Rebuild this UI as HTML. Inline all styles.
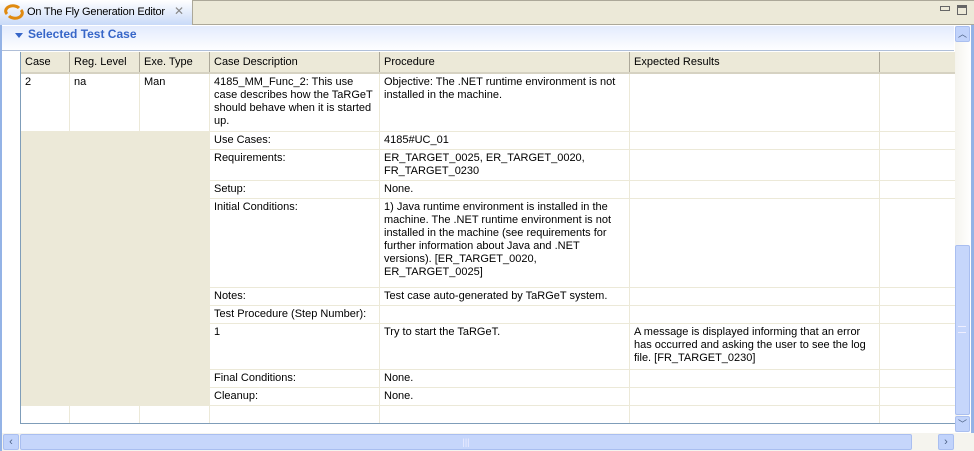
<!DOCTYPE html>
<html><head><style>
*{margin:0;padding:0;box-sizing:border-box}
body{width:974px;height:451px;background:#ECE9D8;font-family:"Liberation Sans",Tahoma,sans-serif;font-size:11px;color:#000;position:relative;overflow:hidden}
.tabbar{position:absolute;left:0;top:0;width:974px;height:25px;background:#ECE9D8;border-top:1px solid #aca899;border-bottom:1px solid #aca899}
.tab{position:absolute;left:0;top:0;width:193px;height:25px;background:linear-gradient(#fff,#c9daf8);border-right:1px solid #aca899}
.tab span{position:absolute;left:27px;top:6px;font-size:11px;letter-spacing:-0.2px}
.frame{position:absolute;left:0;top:25px;width:974px;height:408px;background:#fff;border-left:2px solid #94b3e6;border-right:3px solid #94b3e6}
.hdr{position:absolute;left:2px;top:26px;width:952px;height:25px;background:linear-gradient(#e3ebfd,#fff)}
.hdr span{position:absolute;left:26px;top:1px;color:#3766c8;font-weight:bold;font-size:12px}
table{position:absolute;left:20px;top:52px;border-collapse:collapse;table-layout:fixed;width:935px}
td,th{border:1px solid #ECE9D8;vertical-align:top;padding:2px 4px;line-height:13px;font-weight:normal;text-align:left;overflow:hidden}
th{background:#ECE9D8;border-right:1px solid #aca899;border-bottom:2px solid #d6d2c2;height:20px;padding:3px 4px}
.b{background:#ECE9D8}
.tw{position:absolute;left:20px;top:52px;width:936px;height:372px;border-left:1px solid #7f9db9;border-bottom:1px solid #7f9db9}
</style></head><body>
<div class="tabbar"></div>
<div class="tab"><svg style="position:absolute;left:3px;top:4px" width="22" height="16" viewBox="0 0 22 16"><path d="M4 10 A7 5 0 0 1 16 4" stroke="#e08a10" stroke-width="3" fill="none"/><path d="M18 6 A7 5 0 0 1 6 12" stroke="#e08a10" stroke-width="3" fill="none"/></svg><span>On The Fly Generation Editor</span><span style="left:174px;top:4px;color:#888;font-size:12px">✕</span></div>
<div style="position:absolute;left:940px;top:6px;width:10px;height:5px;border:1px solid #666"></div>
<div style="position:absolute;left:957px;top:5px;width:10px;height:10px;border:1px solid #666;border-top-width:3px"></div>
<div class="frame"></div>
<div class="hdr"><svg style="position:absolute;left:13px;top:7px" width="8" height="6"><path d="M0 0H8L4 5Z" fill="#3766c8"/></svg><span>Selected Test Case</span></div>
<div style="position:absolute;left:2px;top:50px;width:952px;height:1px;background:#b0bfd8"></div>
<table>
<colgroup><col style="width:49px"><col style="width:70px"><col style="width:70px"><col style="width:170px"><col style="width:250px"><col style="width:250px"><col style="width:76px"></colgroup>
<tr><th>Case</th><th>Reg. Level</th><th>Exe. Type</th><th>Case Description</th><th>Procedure</th><th>Expected Results</th><th style="border-right:none"></th></tr>
<tr style="height:58px"><td>2</td><td>na</td><td>Man</td><td>4185_MM_Func_2: This use case describes how the TaRGeT should behave when it is started up.</td><td>Objective: The .NET runtime environment is not installed in the machine.</td><td></td><td></td></tr>
<tr style="height:18px"><td class="b" colspan="3" rowspan="9" style="border:none"></td><td>Use Cases:</td><td>4185#UC_01</td><td></td><td></td></tr>
<tr style="height:31px"><td>Requirements:</td><td>ER_TARGET_0025, ER_TARGET_0020, FR_TARGET_0230</td><td></td><td></td></tr>
<tr style="height:18px"><td>Setup:</td><td>None.</td><td></td><td></td></tr>
<tr style="height:89px"><td>Initial Conditions:</td><td>1) Java runtime environment is installed in the machine. The .NET runtime environment is not installed in the machine (see requirements for further information about Java and .NET versions). [ER_TARGET_0020, ER_TARGET_0025]</td><td></td><td></td></tr>
<tr style="height:18px"><td>Notes:</td><td>Test case auto-generated by TaRGeT system.</td><td></td><td></td></tr>
<tr style="height:18px"><td>Test Procedure (Step Number):</td><td></td><td></td><td></td></tr>
<tr style="height:46px"><td>1</td><td>Try to start the TaRGeT.</td><td>A message is displayed informing that an error has occurred and asking the user to see the log file. [FR_TARGET_0230]</td><td></td></tr>
<tr style="height:18px"><td>Final Conditions:</td><td>None.</td><td></td><td></td></tr>
<tr style="height:18px"><td>Cleanup:</td><td>None.</td><td></td><td></td></tr>
<tr style="height:18px"><td></td><td></td><td></td><td></td><td></td><td></td><td></td></tr>
</table>
<div class="tw"></div>
<div style="position:absolute;left:955px;top:26px;width:16px;height:406px;background:linear-gradient(90deg,#f5f4ee,#fff)"></div>
<div style="position:absolute;left:955px;top:26px;width:15px;height:16px;background:#c1d3fb;border:1px solid #aabff0;border-radius:2px;color:#4d6185;font-size:9px;text-align:center;line-height:14px">︿</div>
<div style="position:absolute;left:955px;top:245px;width:15px;height:170px;background:#c6d6fb;border:1px solid #a9bef0;border-radius:2px"></div>
<div style="position:absolute;left:958px;top:326px;width:8px;height:7px;border-top:1px solid #eef;border-bottom:1px solid #eef"></div>
<div style="position:absolute;left:955px;top:416px;width:15px;height:16px;background:#c1d3fb;border:1px solid #aabff0;border-radius:2px;color:#4d6185;font-size:9px;text-align:center;line-height:14px">﹀</div>
<div style="position:absolute;left:0;top:433px;width:974px;height:18px;background:#f5f4ee;border-left:2px solid #94b3e6"></div>
<div style="position:absolute;left:3px;top:434px;width:16px;height:16px;background:#c1d3fb;border:1px solid #aabff0;border-radius:2px;color:#4d6185;font-size:11px;text-align:center;line-height:14px">‹</div>
<div style="position:absolute;left:20px;top:434px;width:892px;height:16px;background:#c6d6fb;border:1px solid #a9bef0;border-radius:2px;text-align:center;color:#eef;font-size:9px;line-height:14px">|||</div>
<div style="position:absolute;left:938px;top:434px;width:16px;height:16px;background:#c1d3fb;border:1px solid #aabff0;border-radius:2px;color:#4d6185;font-size:11px;text-align:center;line-height:14px">›</div>
</body></html>
